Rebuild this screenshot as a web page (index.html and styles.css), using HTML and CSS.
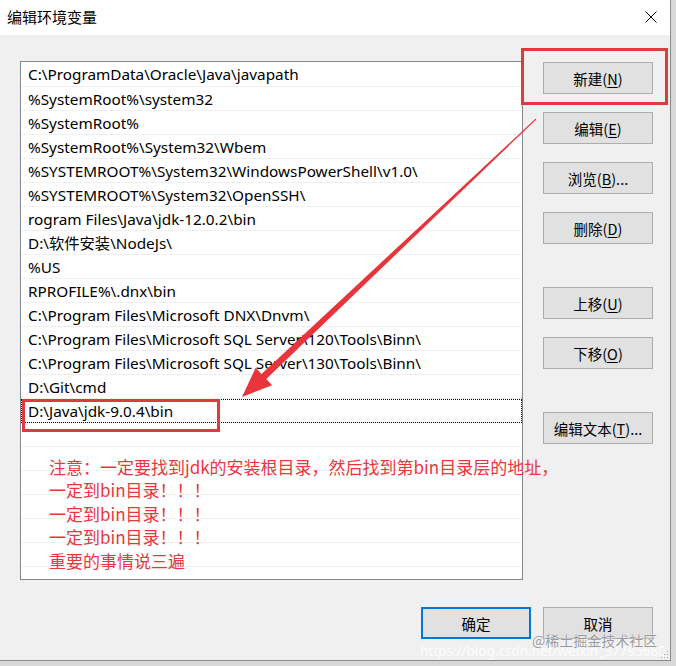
FILE: index.html
```html
<!DOCTYPE html>
<html lang="zh-CN">
<head>
<meta charset="utf-8">
<title>编辑环境变量</title>
<link rel="stylesheet" href="styles.css">
</head>
<body>
<div class="window">
  <div class="titlebar">
    <span class="title">编辑环境变量</span>
    <svg class="close" width="12" height="12" viewBox="0 0 12 12"><path d="M0.5 0.5 L11.5 11.5 M11.5 0.5 L0.5 11.5" stroke="#000" stroke-width="1" fill="none"/></svg>
  </div>
  <div class="content">
    <div class="main">
      <ul class="list">
        <li>C:\ProgramData\Oracle\Java\javapath</li>
        <li>%SystemRoot%\system32</li>
        <li>%SystemRoot%</li>
        <li>%SystemRoot%\System32\Wbem</li>
        <li>%SYSTEMROOT%\System32\WindowsPowerShell\v1.0\</li>
        <li>%SYSTEMROOT%\System32\OpenSSH\</li>
        <li>rogram Files\Java\jdk-12.0.2\bin</li>
        <li>D:\软件安装\NodeJs\</li>
        <li>%US</li>
        <li>RPROFILE%\.dnx\bin</li>
        <li>C:\Program Files\Microsoft DNX\Dnvm\</li>
        <li>C:\Program Files\Microsoft SQL Server\120\Tools\Binn\</li>
        <li>C:\Program Files\Microsoft SQL Server\130\Tools\Binn\</li>
        <li>D:\Git\cmd</li>
        <li class="focused">D:\Java\jdk-9.0.4\bin</li>
        <li></li><li></li><li></li><li></li><li></li><li></li><li></li>
      </ul>
      <div class="side">
        <button class="btn">新建(<u>N</u>)</button>
        <button class="btn">编辑(<u>E</u>)</button>
        <button class="btn">浏览(<u>B</u>)...</button>
        <button class="btn">删除(<u>D</u>)</button>
        <button class="btn group">上移(<u>U</u>)</button>
        <button class="btn">下移(<u>O</u>)</button>
        <button class="btn group">编辑文本(<u>T</u>)...</button>
      </div>
    </div>
    <div class="footer">
      <button class="btn default">确定</button>
      <button class="btn">取消</button>
    </div>
  </div>

  <div class="note">
    <p>注意：一定要找到jdk的安装根目录，然后找到第bin目录层的地址，</p>
    <p>一定到bin目录！！！</p>
    <p>一定到bin目录！！！</p>
    <p>一定到bin目录！！！</p>
    <p>重要的事情说三遍</p>
  </div>
  <div class="mark mark-row"></div>
  <div class="mark mark-new"></div>
  <svg class="arrow" width="676" height="666" viewBox="0 0 676 666">
    <polygon fill="#e8353b" points="536.3,119.4 266.3,379.1 272.1,385.2 242,397 255.7,367.8 261.5,373.9 535.7,118.6"/>
  </svg>
  <div class="wm-url">https://blog.csdn.net/weixin_37795680</div>
  <div class="wm">@稀土掘金技术社区</div>
  <div class="grip"></div>
</div>
</body>
</html>
```
FILE: styles.css
```css
html, body {
  margin: 0;
  padding: 0;
}
body {
  width: 676px;
  height: 666px;
  background: #d8d8d8;
  overflow: hidden;
  font-family: "Noto Sans", "Noto Sans CJK SC", sans-serif;
}
.window {
  position: relative;
  width: 670px;
  height: 660px;
  background: #f0f0f0;
  border-right: 1px solid #8a8a8a;
  border-bottom: 1px solid #8a8a8a;
  display: flex;
  flex-direction: column;
  overflow: hidden;
}
.titlebar {
  height: 35px;
  background: #fff;
  display: flex;
  align-items: center;
  justify-content: space-between;
  padding: 0 13px 0 7px;
  flex-shrink: 0;
}
.title {
  font-family: "Noto Sans CJK SC", sans-serif;
  font-size: 15px;
  color: #000;
  margin-top: -2px;
}
.close {
  display: block;
  margin-top: -2px;
}
.content {
  flex: 1;
  display: flex;
  flex-direction: column;
  padding: 26px 0 0 20px;
}
.main {
  display: flex;
}
.list {
  list-style: none;
  margin: 0;
  padding: 0;
  width: 501px;
  height: 517px;
  border: 1px solid #828790;
  background: #fff;
  overflow: hidden;
}
.list li {
  height: 23px;
  border-bottom: 1px solid #f0f0f0;
  padding-left: 7px;
  font-size: 15.3px;
  line-height: 24px;
  color: #000;
  white-space: nowrap;
  box-sizing: content-box;
}
.list li:first-child {
  height: 24px;
}
.list li.focused {
  outline: 1px dotted #000;
  outline-offset: -1px;
}
.side {
  display: flex;
  flex-direction: column;
  gap: 18px;
  margin-left: 20px;
  padding-top: 1px;
}
.btn {
  width: 110px;
  height: 32px;
  background: #e1e1e1;
  border: 1px solid #adadad;
  font-family: "Noto Sans CJK SC", sans-serif;
  font-size: 14.5px;
  color: #000;
  padding: 0;
  margin: 0;
}
.btn u {
  text-decoration-thickness: 1px;
  text-underline-offset: 2px;
}
.btn.group {
  margin-top: 25px;
}
.footer {
  display: flex;
  justify-content: flex-end;
  gap: 12px;
  padding-right: 17px;
  margin-top: 27px;
}
.btn.default {
  border: 2px solid #0078d7;
}
.note {
  position: absolute;
  left: 49px;
  top: 455px;
  color: #e8383d;
  font-family: "Noto Sans CJK SC", sans-serif;
  font-size: 17px;
  line-height: 23.4px;
}
.note p {
  margin: 0;
  white-space: nowrap;
}
.mark {
  position: absolute;
  border: 3px solid #e0393e;
  box-sizing: border-box;
}
.mark-row {
  left: 22px;
  top: 399px;
  width: 198px;
  height: 33px;
}
.mark-new {
  left: 521px;
  top: 48px;
  width: 147px;
  height: 57px;
}
.arrow {
  position: absolute;
  left: 0;
  top: 0;
  pointer-events: none;
}
.wm {
  position: absolute;
  left: 532px;
  top: 630px;
  font-family: "Noto Sans CJK SC", sans-serif;
  font-size: 14px;
  color: #9a9a9a;
  text-shadow: 0 0 1px #fff, 0 0 1px #fff;
  white-space: nowrap;
}
.wm-url {
  position: absolute;
  left: 420px;
  top: 642px;
  font-family: "Noto Sans", sans-serif;
  font-size: 13.5px;
  color: rgba(255, 255, 255, 0.85);
  white-space: nowrap;
}
.grip {
  position: absolute;
  right: 2px;
  bottom: 2px;
  width: 8px;
  height: 8px;
  background:
    radial-gradient(circle, #a0a0a0 0.8px, transparent 1px) 0 0 / 3px 3px;
  clip-path: polygon(100% 0, 100% 100%, 0 100%);
}
```
